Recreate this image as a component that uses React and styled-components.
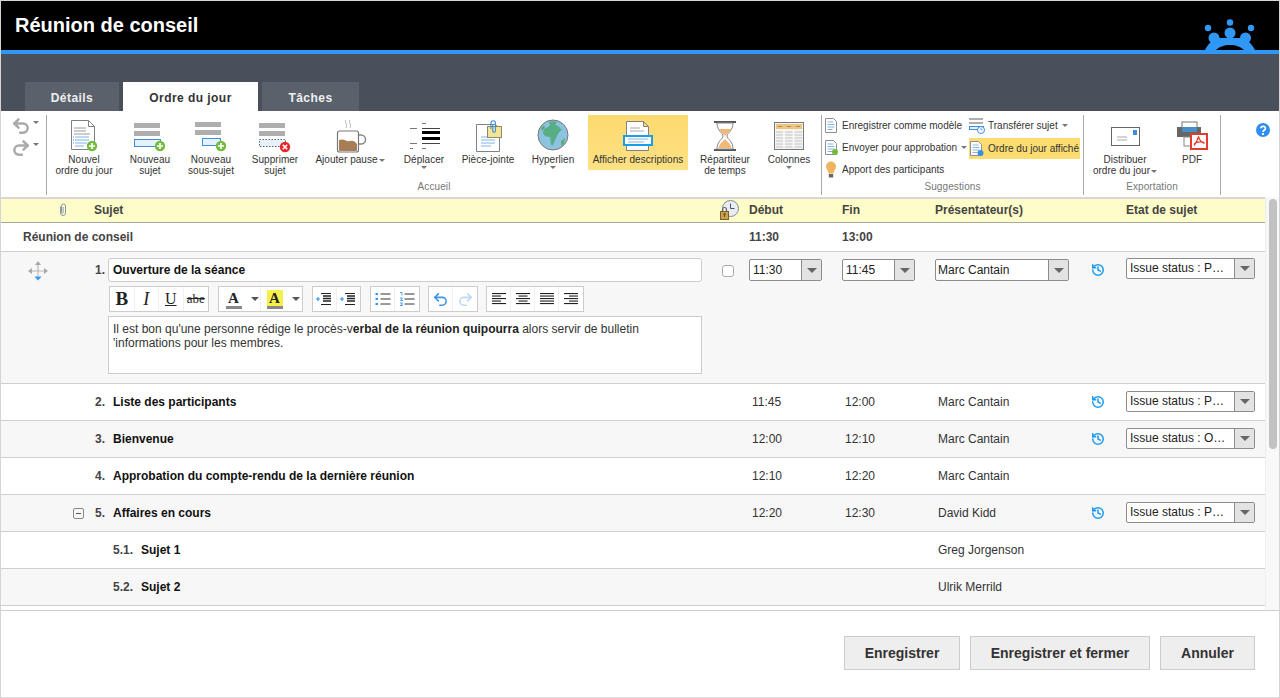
import React from 'react';
import styled, { createGlobalStyle } from 'styled-components';
import { Undo2, Redo2, History } from 'lucide-react';

const GlobalStyle = createGlobalStyle`
  html, body {
    margin: 0;
    padding: 0;
    background: #fff;
    font-family: "Liberation Sans", Arial, sans-serif;
    color: #333;
  }
  * { box-sizing: border-box; }
`;

const Frame = styled.div`
  width: 1280px;
  height: 698px;
  display: flex;
  flex-direction: column;
  overflow: hidden;
  border: 1px solid #d4d4d4;
  border-bottom-color: #ddd;
`;

const Header = styled.header`
  height: 53px;
  flex: none;
  background: #000;
  border-bottom: 4px solid #3197f5;
  display: flex;
  justify-content: space-between;
  padding: 12px 0 0 14px;
  position: relative;
`;

const Title = styled.h1`
  margin: 0;
  font-size: 20px;
  line-height: 24px;
  font-weight: 700;
  color: #fff;
`;

const LogoWrap = styled.div`
  position: absolute;
  right: 23px;
  bottom: -4px;
  height: 36px;
  line-height: 0;
`;

const TabBand = styled.div`
  height: 57px;
  flex: none;
  background: #4a505b;
  display: flex;
  align-items: flex-end;
  gap: 4px;
  padding-left: 24px;
`;

const Tab = styled.div`
  width: ${p => p.$w}px;
  height: 29px;
  padding-top: 2px;
  display: flex;
  align-items: center;
  justify-content: center;
  font-size: 12px;
  font-weight: 700;
  letter-spacing: 0.45px;
  background: ${p => (p.$active ? '#fff' : '#5a616a')};
  color: ${p => (p.$active ? '#333' : '#eef0f2')};
`;

const Ribbon = styled.div`
  height: 86px;
  flex: none;
  display: flex;
  background: #fff;
  padding-top: 4px;
  align-items: stretch;
`;

const UndoGroup = styled.div`
  width: 46px;
  height: 80px;
  border-right: 1px solid #a9a9a9;
  display: flex;
  flex-direction: column;
  gap: 3px;
  padding: 1px 0 0 10px;
`;

const UndoRow = styled.div`
  display: flex;
  align-items: flex-start;
  color: #aaa;
  height: 19px;
  gap: 2px;
  span { margin-top: 5px; }
`;

const RibbonGroup = styled.div`
  width: ${p => p.$w}px;
  height: 80px;
  border-right: 1px solid #a9a9a9;
  display: flex;
  flex-direction: column;
`;

const GroupBody = styled.div`
  height: 66px;
  display: flex;
  align-items: flex-start;
  padding-left: ${p => p.$pad || 0}px;
`;

const GroupLabel = styled.div`
  font-size: 10px;
  line-height: 12px;
  color: #777;
  text-align: center;
  letter-spacing: 0.1px;
`;

const RibbonItem = styled.div`
  width: ${p => p.$w}px;
  flex: none;
  height: 55px;
  display: flex;
  flex-direction: column;
  align-items: center;
  background: ${p => (p.$active ? 'linear-gradient(#fdda6e, #fee184)' : 'transparent')};
  margin-left: ${p => p.$ml || 0}px;
`;

const ItemLabel = styled.div`
  font-size: 10px;
  line-height: 11px;
  text-align: center;
  color: #333;
  white-space: nowrap;
  letter-spacing: 0.04px;
`;

const Caret = styled.span`
  display: inline-block;
  width: 0;
  height: 0;
  border-left: ${p => (p.$big ? 4 : 3)}px solid transparent;
  border-right: ${p => (p.$big ? 4 : 3)}px solid transparent;
  border-top: ${p => (p.$big ? '4px solid #555' : '3px solid #777')};
  vertical-align: middle;
  margin-left: ${p => p.$ml ?? 1}px;
`;

const CaretLine = styled.div`
  height: 11px;
  display: flex;
  align-items: center;
  justify-content: center;
`;

const MiniGrid = styled.div`
  display: grid;
  grid-template-columns: 145px 111px;
  grid-auto-rows: 22px;
  padding-left: 2px;
`;

const MiniItem = styled.div`
  display: flex;
  align-items: center;
  gap: ${p => p.$gap ?? 3}px;
  font-size: 10px;
  white-space: nowrap;
  color: #333;
  height: 21px;
  margin-top: ${p => (p.$active ? '1px' : '0')};
  background: ${p => (p.$active ? '#fddc72' : 'transparent')};
`;

const HelpWrap = styled.div`
  flex: 1;
  display: flex;
  justify-content: flex-end;
  padding: 8px 9px 0 0;
`;

const Content = styled.div`
  flex: 1;
  min-height: 0;
  display: flex;
`;

const TableArea = styled.div`
  width: 1264px;
  flex: none;
  overflow: hidden;
`;

const ScrollTrack = styled.div`
  flex: 1;
  background: #f8f8f8;
  border-left: 1px solid #eee;
  padding: 2px 2px 0 3px;
`;

const ScrollThumb = styled.div`
  height: 250px;
  background: #c2c2c2;
  border-radius: 5px;
`;

const cols = '93px 625px 30px 93px 93px 153px 38px 139px';

const HeadRow = styled.div`
  display: grid;
  grid-template-columns: ${cols};
  align-items: center;
  height: 26px;
  background: #fefcc8;
  border-top: 2px solid #d6d6d6;
  border-bottom: 1px solid #a8a8a0;
  padding-bottom: 1px;
  font-size: 12px;
  font-weight: 700;
  color: #444;
`;

const HeadClip = styled.div`
  display: flex;
  justify-content: flex-end;
  padding-right: 26px;
  line-height: 0;
`;

const Row = styled.div`
  display: grid;
  grid-template-columns: ${cols};
  align-items: center;
  height: ${p => p.$h || 37}px;
  flex: none;
  background: ${p => (p.$alt ? '#f7f7f7' : '#fff')};
  border-bottom: 1px solid #cfcfcf;
  font-size: 12px;
  color: #333;
`;

const OpenRow = styled(Row)`
  height: 132px;
  align-items: start;
  padding-top: 6px;
`;

const SummaryName = styled.div`
  grid-column: 1 / 3;
  padding-left: 22px;
  font-weight: 700;
  color: #444;
`;

const SummaryTime = styled.div`
  font-weight: 700;
  color: #444;
`;

const Handle = styled.div`
  padding: 3px 0 0 27px;
  line-height: 0;
`;

const Toggle = styled.div`
  display: flex;
  justify-content: flex-end;
  padding-right: 10px;
`;

const ToggleBox = styled.div`
  width: 11px;
  height: 11px;
  border: 1px solid #888;
  border-radius: 2px;
  display: flex;
  align-items: center;
  justify-content: center;
  &::after {
    content: '';
    width: 5px;
    height: 1px;
    background: #555;
  }
`;

const Subject = styled.div`
  display: flex;
  align-items: center;
`;

const Num = styled.span`
  width: 11px;
  text-align: right;
  flex: none;
  font-weight: 700;
  color: #444;
`;

const SubNum = styled.span`
  margin-left: 19px;
  width: 28px;
  flex: none;
  font-weight: 700;
  color: #444;
`;

const Name = styled.span`
  font-weight: 700;
  color: #111;
  margin-left: ${p => p.$ml ?? 8}px;
  white-space: nowrap;
`;

const EditCell = styled.div`
  display: grid;
  grid-template-columns: 11px 594px;
  column-gap: 3px;
  row-gap: 4px;
  align-items: center;
`;

const TitleInput = styled.div`
  height: 24px;
  border: 1px solid #ccc;
  border-radius: 3px;
  background: #fff;
  padding-left: 4px;
  font-weight: 700;
  color: #111;
  line-height: 22px;
`;

const EdToolbar = styled.div`
  grid-column: 2;
  height: 26px;
  display: flex;
  padding-left: 1px;
`;

const EdGroup = styled.div`
  display: flex;
  height: 26px;
  background: #fff;
  border: 1px solid #ccc;
  margin-right: ${p => p.$mr || 0}px;
`;

const EdBtn = styled.div`
  width: ${p => p.$w || 24}px;
  display: flex;
  align-items: center;
  justify-content: center;
  border-right: 1px solid ${p => (p.$open ? 'transparent' : '#f0f0f0')};
  font-family: "Liberation Serif", "Times New Roman", serif;
  font-size: ${p => p.$fs || 17}px;
  font-weight: ${p => (p.$b ? 700 : 400)};
  font-style: ${p => (p.$i ? 'italic' : 'normal')};
  text-decoration: ${p => p.$deco || 'none'};
  color: ${p => p.$color || '#222'};
  &:last-child { border-right: 0; }
`;

const ColorA = styled.span`
  display: inline-block;
  width: 16px;
  height: 19px;
  line-height: 16px;
  text-align: center;
  font-family: "Liberation Serif", serif;
  font-size: 15px;
  font-weight: 700;
  color: #222;
  background: ${p => p.$bg || 'transparent'};
  border-bottom: 3px solid #888;
`;

const Editor = styled.div`
  grid-column: 2;
  height: 58px;
  border: 1px solid #ccc;
  background: #fff;
  padding: 5px 4px;
  font-size: 12px;
  line-height: 14px;
  color: #333;
  strong { color: #222; }
`;

const CheckCell = styled.div`
  padding: 7px 0 0 3px;
`;

const CheckBox = styled.div`
  width: 12px;
  height: 12px;
  background: #fff;
  border: 1px solid #aaa;
  border-radius: 3px;
`;

const Select = styled.div`
  width: ${p => p.$w}px;
  height: ${p => (p.$status ? 21 : 22)}px;
  margin-top: ${p => p.$mt || 0}px;
  margin-bottom: ${p => (p.$status ? 1 : 0)}px;
  display: flex;
  background: #fff;
  border: 1px solid #8c8c8c;
  border-radius: 2px;
  font-size: 12px;
  color: #222;
`;

const SelectText = styled.div`
  flex: 1;
  padding-left: ${p => p.$pl || 3}px;
  line-height: ${p => (p.$status ? 18 : 20)}px;
  white-space: nowrap;
  overflow: hidden;
`;

const SelectBtn = styled.div`
  width: 20px;
  background: #e3e3e3;
  border-left: 1px solid #8c8c8c;
  display: flex;
  align-items: center;
  justify-content: center;
  &::after {
    content: '';
    border-left: 5px solid transparent;
    border-right: 5px solid transparent;
    border-top: 5px solid #666;
  }
`;

const Value = styled.div`
  padding-left: 3px;
  color: #333;
`;

const HistoryCell = styled.div`
  padding: ${p => (p.$top ? '5px' : '0')} 0 0 3px;
  color: #1e9bf0;
  line-height: 0;
`;

const Footer = styled.footer`
  height: 87px;
  flex: none;
  border-top: 1px solid #cfcfcf;
  display: flex;
  justify-content: flex-end;
  align-items: flex-start;
  gap: 10px;
  padding: 25px 24px 0 0;
  background: #fff;
`;

const FootButton = styled.div`
  width: ${p => p.$w}px;
  height: 34px;
  background: #eee;
  border: 1px solid #ccc;
  display: flex;
  align-items: center;
  justify-content: center;
  font-size: 14px;
  font-weight: 700;
  color: #333;
`;

const Ico = ({ cx, w = 44, children }) => (
  <svg width={w} height={39} viewBox={`${cx - w / 2} 115 ${w} 39`} style={{ flex: 'none' }}>
    {children}
  </svg>
);

const Plus = ({ x, y }) => (
  <g>
    <circle cx={x} cy={y} r={5.2} fill="#74bb3e" />
    <path d={`M${x - 3} ${y}h6M${x} ${y - 3}v6`} stroke="#fff" strokeWidth={1.7} />
  </g>
);

const Cross = ({ x, y }) => (
  <g>
    <circle cx={x} cy={y} r={5.2} fill="#e8262a" />
    <path d={`M${x - 2.2} ${y - 2.2}l4.4 4.4M${x + 2.2} ${y - 2.2}l-4.4 4.4`} stroke="#fff" strokeWidth={1.6} />
  </g>
);

const DocShape = ({ x, y, w, h, fold = 6 }) => (
  <path
    d={`M${x + 0.5} ${y + 0.5}h${w - fold}l${fold} ${fold}V${y + h - 0.5}H${x + 0.5}zM${x + w - fold + 0.5} ${y + 0.5}v${fold}h${fold}`}
    fill="#fff"
    stroke="#7d8288"
  />
);

const NewDocIcon = () => (
  <Ico cx={84}>
    <DocShape x={71} y={120} w={23} h={30} />
    <path d="M74 128h12M74 131h12M74 134h16" stroke="#9a9a9a" />
    <path d="M75 137h14M75 140h14M75 143h12M75 146h9" stroke="#7fb2e5" />
    <path d="M73 137h1M73 140h1M73 143h1" stroke="#3d8fe0" />
    <Plus x={92} y={146} />
  </Ico>
);

const NewTopicIcon = () => (
  <Ico cx={150}>
    <rect x={134} y={123} width={26} height={5} fill="#aeaeae" />
    <rect x={134} y={131} width={26} height={5} fill="#aeaeae" />
    <rect x={134.5} y={139.5} width={26} height={7} fill="#e6f1fb" stroke="#3b8fe0" />
    <Plus x={160} y={146} />
  </Ico>
);

const NewSubIcon = () => (
  <Ico cx={211}>
    <rect x={195} y={122} width={26} height={5} fill="#aeaeae" />
    <rect x={195} y={130} width={26} height={5} fill="#aeaeae" />
    <rect x={202.5} y={138.5} width={18} height={7} fill="#e6f1fb" stroke="#3b8fe0" />
    <Plus x={221} y={146} />
  </Ico>
);

const DeleteIcon = () => (
  <Ico cx={275}>
    <rect x={259} y={123} width={26} height={5} fill="#aeaeae" />
    <rect x={259} y={131} width={26} height={5} fill="#aeaeae" />
    <rect x={259.5} y={139.5} width={26} height={7} fill="#e6f1fb" stroke="#666" strokeDasharray="1.5 1.5" />
    <Cross x={285} y={147} />
  </Ico>
);

const CupIcon = () => (
  <Ico cx={350}>
    <path d="M346 120c-2 2 2 4 0 8M350 120c-2 2 2 4 0 8" fill="none" stroke="#b5b5b5" />
    <path d="M358 135h3a4.5 4.5 0 0 1 4.5 4.5a4.5 4.5 0 0 1-4.5 4.5h-3" fill="none" stroke="#888" strokeWidth={1.5} />
    <path d="M337.5 133a2 2 0 0 1 2-2h17a2 2 0 0 1 2 2v17a2 2 0 0 1-2 2h-17a2 2 0 0 1-2-2z" fill="#fff" stroke="#777" strokeWidth={1.2} />
    <path d="M339 140c5-2 7 2 11 1s5 1 7 3v6a1 1 0 0 1-1 1h-16a1 1 0 0 1-1-1z" fill="#a87d55" />
  </Ico>
);

const MoveIcon = () => (
  <Ico cx={424}>
    <path d="M410 128.5h7M410 143.5h7M410 148.5h3M422 123.5h4M422 148.5h4" stroke="#777" strokeWidth={1} />
    <path d="M422 128.5h18M422 143.5h18" stroke="#444" strokeWidth={1} />
    <path d="M422 132.5h18M422 138.5h18" stroke="#000" strokeWidth={3} />
  </Ico>
);

const AttachIcon = () => (
  <Ico cx={488}>
    <DocShape x={476} y={124} w={23} h={28} fold={4} />
    <path d="M481 137h14M481 140h14M481 143h14M481 146h10" stroke="#7fb2e5" />
    <rect x={487.5} y={126.5} width={14} height={11} fill="#f3e595" stroke="#8b8b6a" />
    <path d="M491 129v-6a2.2 2.2 0 0 1 4.4 0v8a1.3 1.3 0 0 1-2.6 0v-6" fill="none" stroke="#3b8fe0" strokeWidth={1.1} />
  </Ico>
);

const GlobeIcon = () => (
  <Ico cx={553}>
    <circle cx={553} cy={135} r={15} fill="#8dc2e0" stroke="#777" />
    <path d="M549 122c3-1 6-1 8 0l-2 3 3 1 4 4c-2 1-3 2-4 4-1 3-3 5-4 9l-2 3c-2-3-1-6-2-9-3 0-6-1-7-4 0-3 2-5 5-6l2-2z" fill="#57ad84" />
    <path d="M561 141l4-3-1 6-3 2zM541 128l3-3 1 3-3 3z" fill="#57ad84" />
  </Ico>
);

const ShowDescIcon = () => (
  <Ico cx={638}>
    <DocShape x={626} y={121} w={22} h={30} fold={5} />
    <path d="M630 128h10M630 131h14" stroke="#aaa" />
    <rect x={624} y={136} width={28} height={9} fill="#fff" stroke="#17a0e8" strokeWidth={2} />
    <path d="M628 139h20M628 142h16" stroke="#8bb4d6" />
  </Ico>
);

const HourglassIcon = () => (
  <Ico cx={725}>
    <path d="M714 122h22M714 150h22" stroke="#555" strokeWidth={2} />
    <path d="M717 123c0 8 6 10 6 13s-6 5-6 13h16c0-8-6-10-6-13s6-5 6-13z" fill="#fff" stroke="#888" />
    <path d="M719 129h12c-1 3-5 5-6 7-1-2-5-4-6-7zM718.5 148c1-5 5-7 6.500-9 1.500 2 5.500 4 6.500 9z" fill="#f1b878" />
  </Ico>
);

const ColumnsIcon = () => (
  <Ico cx={789}>
    <rect x={774.5} y={122.500} width={29} height={27} fill="#f3f3f3" stroke="#777" />
    <rect x={776} y={124} width={26} height={5} fill="#eec27f" />
    <path d="M778 126.500h4M787 126.500h4M796 126.500h4" stroke="#b98b4b" />
    <path d="M776 132h26M776 135h26M776 138h26M776 141h26M776 144h26M776 147h26" stroke="#c4c4c4" />
    <path d="M784 130v18M793.500 130v18" stroke="#fff" strokeWidth={1.5} />
  </Ico>
);

const EnvelopeIcon = () => (
  <Ico cx={1125}>
    <rect x={1111.500} y={127.500} width={28} height={18} fill="#fff" stroke="#666" />
    <rect x={1133} y={130} width={4} height={5} fill="#3b8fe0" />
    <path d="M1117 137h10M1117 140h10" stroke="#aaa" />
  </Ico>
);

const PdfIcon = () => (
  <Ico cx={1192}>
    <rect x={1182} y={122} width={15} height={6} fill="#fff" stroke="#777" />
    <rect x={1177} y={127} width={24} height={10} fill="#666" />
    <rect x={1182} y={127} width={15} height={5} fill="#4a90c8" />
    <rect x={1184} y={137} width={12} height={9} fill="#fff" stroke="#888" />
    <rect x={1191} y={134} width={16} height={15} fill="#fff" stroke="#e53a2e" strokeWidth={2} />
    <path d="M1198.500 136.500c-1 4-2 6-4.500 9M1198.500 136.500c1 4 3 6 6 7M1194 143.500c3-1.500 7-2 10.500-1" fill="none" stroke="#e53a2e" strokeWidth={1.2} />
  </Ico>
);

const DocMini = ({ children }) => (
  <svg width={15} height={17} viewBox="0 0 15 17" style={{ flex: 'none' }}>
    <path d="M1.500 1.500h8l3 3v11h-11z" fill="#fff" stroke="#8a8f95" />
    <path d="M3.500 5h6M3.500 7.500h7M3.500 10h7M3.500 12.500h5" stroke="#86b5e2" />
    {children}
  </svg>
);

const BulbIcon = () => (
  <svg width={15} height={17} viewBox="0 0 15 17" style={{ flex: 'none' }}>
    <path d="M7 0.500a5 5 0 0 1 5 5c0 3-2.500 4.500-2.800 7h-4.400C4.500 10 2 8.500 2 5.500a5 5 0 0 1 5-5z" fill="#f0b45e" />
    <rect x={4.800} y={13} width={4.400} height={3.500} fill="#666" />
  </svg>
);

const TransferIcon = () => (
  <svg width={16} height={17} viewBox="0 0 16 17" style={{ flex: 'none' }}>
    <rect x={0} y={1} width={14} height={2} fill="#aeaeae" />
    <rect x={0} y={5} width={14} height={2} fill="#aeaeae" />
    <rect x={0.500} y={9.500} width={14} height={3} fill="#e6f1fb" stroke="#3b8fe0" />
    <circle cx={12} cy={13} r={3.500} fill="#fff" stroke="#3b8fe0" />
    <path d="M12 11v2h1.500" fill="none" stroke="#3b8fe0" strokeWidth={0.8} />
  </svg>
);

const LogoIcon = () => (
  <svg width={52} height={36} viewBox="1204 18 52 36">
    <circle cx={1208} cy={28} r={3.200} fill="#3197f5" />
    <circle cx={1230} cy={22.500} r={3.200} fill="#3197f5" />
    <circle cx={1251} cy={28} r={3.200} fill="#3197f5" />
    <circle cx={1214} cy={38} r={5.500} fill="#3197f5" />
    <circle cx={1230} cy={33} r={5.500} fill="#3197f5" />
    <circle cx={1245.500} cy={38} r={5.500} fill="#3197f5" />
    <path d="M1205 50c3-6 8-11 13-12h24c5 1 10 6 13 12h-11c-3-3-8-5-14-5s-11 2-14 5z" fill="#3197f5" />
    <path d="M1213 38h34v6h-34z" fill="#3197f5" />
  </svg>
);

const HelpIcon = () => (
  <svg width={14} height={14} viewBox="0 0 14 14">
    <circle cx={7} cy={7} r={7} fill="#2f8fef" />
    <path d="M4.800 5.300a2.300 2 0 1 1 3.600 1.700c-.9.600-1.400 1-1.400 2" fill="none" stroke="#fff" strokeWidth={1.700} />
    <rect x={6} y={10} width={2} height={2} fill="#fff" />
  </svg>
);

const ClipIcon = () => (
  <svg width={10} height={14} viewBox="0 0 10 14">
    <path d="M2.500 3.500v6.500a2.500 2.500 0 0 0 5 0V3a2 2 0 0 0-4 0v6.500a.8.8 0 0 0 1.600 0V4" fill="none" stroke="#8a9aa8" strokeWidth={1} />
  </svg>
);

const ClockLockIcon = () => (
  <svg width={21} height={21} viewBox="0 0 21 21">
    <circle cx={11.500} cy={8.500} r={8} fill="#e8ecf4" stroke="#8a8a8a" />
    <path d="M11.500 3.500v5h4" fill="none" stroke="#555" />
    <rect x={1.500} y={11.500} width={8} height={8} fill="#c9a24e" stroke="#7a6328" />
    <path d="M3.500 11.500v-2a2 2 0 0 1 4 0v2" fill="none" stroke="#666" strokeWidth={1.200} />
    <path d="M4 14h3M5.500 14v3" stroke="#5c4a18" />
  </svg>
);

const MoveHandle = () => (
  <svg width={20} height={20} viewBox="0 0 20 20">
    <path d="M10 4v11M4 10h12" stroke="#b8b8b8" strokeWidth={1.200} />
    <path d="M10 0l3 4H7zM0 10l4-3v6zM20 10l-4-3v6z" fill="#a8a8a8" />
    <path d="M10 19.500l-3.500-4h7z" fill="#3197f5" />
  </svg>
);

const Lines = ({ rows }) => (
  <svg width={16} height={14} viewBox="0 0 16 14">
    {rows.map(([x, w], i) => (
      <rect key={i} x={x} y={1 + i * 2.500} width={w} height={1.100} fill="#222" />
    ))}
  </svg>
);

const IndentIcon = () => (
  <svg width={16} height={14} viewBox="0 0 16 14">
    <path d="M5 1.500h10M5 12.500h10" stroke="#222" />
    <path d="M7 4h8M7 6.500h8M7 9h8" stroke="#222" strokeWidth={1.400} />
    <path d="M0 7h4M2 5v4" stroke="#3197f5" strokeWidth={1.200} />
  </svg>
);

const ListIcon = ({ numbered }) => (
  <svg width={16} height={14} viewBox="0 0 16 14">
    <path d="M5.500 2h10M5.500 7h10M5.500 12h10" stroke="#333" />
    {numbered ? (
      <path d="M1 .500h2v3M1 6h2.500l-2 2.500h2.500M1 11h2.500l-1 1 1 1.500H1" fill="none" stroke="#3197f5" strokeWidth={0.900} />
    ) : (
      <path d="M.500 2h2.500M.500 7h2.500M.500 12h2.500" stroke="#3197f5" strokeWidth={2} />
    )}
  </svg>
);

const topics = [
  { num: '2.', name: 'Liste des participants', start: '11:45', end: '12:00', who: 'Marc Cantain', status: 'Issue status : P…' },
  { num: '3.', name: 'Bienvenue', start: '12:00', end: '12:10', who: 'Marc Cantain', status: 'Issue status : O…', alt: true },
  { num: '4.', name: 'Approbation du compte-rendu de la dernière réunion', start: '12:10', end: '12:20', who: 'Marc Cantain' },
  { num: '5.', name: 'Affaires en cours', start: '12:20', end: '12:30', who: 'David Kidd', status: 'Issue status : P…', alt: true, toggle: true },
];

const TopicRow = ({ t }) => (
  <Row $alt={t.alt}>
    <Toggle>{t.toggle && <ToggleBox />}</Toggle>
    <Subject>
      <Num>{t.num}</Num>
      <Name>{t.name}</Name>
    </Subject>
    <div />
    <Value>{t.start}</Value>
    <Value>{t.end}</Value>
    <Value>{t.who}</Value>
    <HistoryCell>{t.status && <History size={14} strokeWidth={2.6} />}</HistoryCell>
    {t.status ? (
      <Select $w={129} $status>
        <SelectText $status>{t.status}</SelectText>
        <SelectBtn />
      </Select>
    ) : (
      <div />
    )}
  </Row>
);

const SubRow = ({ num, name, who, alt }) => (
  <Row $alt={alt}>
    <div />
    <Subject>
      <SubNum>{num}</SubNum>
      <Name $ml={0}>{name}</Name>
    </Subject>
    <div />
    <div />
    <div />
    <Value>{who}</Value>
  </Row>
);

const App = () => (
  <Frame>
    <GlobalStyle />
    <Header>
      <Title>Réunion de conseil</Title>
      <LogoWrap>
        <LogoIcon />
      </LogoWrap>
    </Header>
    <TabBand>
      <Tab $w={94}>Détails</Tab>
      <Tab $w={135} $active>Ordre du jour</Tab>
      <Tab $w={97}>Tâches</Tab>
    </TabBand>

    <Ribbon>
      <UndoGroup>
        <UndoRow>
          <Undo2 size={20} strokeWidth={3} />
          <Caret $ml={0} />
        </UndoRow>
        <UndoRow>
          <Redo2 size={20} strokeWidth={3} />
          <Caret $ml={0} />
        </UndoRow>
      </UndoGroup>

      <RibbonGroup $w={775}>
        <GroupBody>
          <RibbonItem $w={74}><NewDocIcon /><ItemLabel>Nouvel<br />ordre du jour</ItemLabel></RibbonItem>
          <RibbonItem $w={58}><NewTopicIcon /><ItemLabel>Nouveau<br />sujet</ItemLabel></RibbonItem>
          <RibbonItem $w={64}><NewSubIcon /><ItemLabel>Nouveau<br />sous-sujet</ItemLabel></RibbonItem>
          <RibbonItem $w={64}><DeleteIcon /><ItemLabel>Supprimer<br />sujet</ItemLabel></RibbonItem>
          <RibbonItem $w={86}><CupIcon /><ItemLabel>Ajouter pause<Caret /></ItemLabel></RibbonItem>
          <RibbonItem $w={62}><MoveIcon /><ItemLabel>Déplacer</ItemLabel><CaretLine><Caret $ml={0} /></CaretLine></RibbonItem>
          <RibbonItem $w={66}><AttachIcon /><ItemLabel>Pièce-jointe</ItemLabel></RibbonItem>
          <RibbonItem $w={64}><GlobeIcon /><ItemLabel>Hyperlien</ItemLabel><CaretLine><Caret $ml={0} /></CaretLine></RibbonItem>
          <RibbonItem $w={100} $ml={3} $active><ShowDescIcon /><ItemLabel>Afficher descriptions</ItemLabel></RibbonItem>
          <RibbonItem $w={74}><HourglassIcon /><ItemLabel>Répartiteur<br />de temps</ItemLabel></RibbonItem>
          <RibbonItem $w={54}><ColumnsIcon /><ItemLabel>Colonnes</ItemLabel><CaretLine><Caret $ml={0} /></CaretLine></RibbonItem>
        </GroupBody>
        <GroupLabel>Accueil</GroupLabel>
      </RibbonGroup>

      <RibbonGroup $w={262}>
        <GroupBody>
          <MiniGrid>
            <MiniItem><DocMini />Enregistrer comme modèle</MiniItem>
            <MiniItem><TransferIcon />Transférer sujet<Caret /></MiniItem>
            <MiniItem>
              <DocMini><circle cx={11} cy={13} r={3} fill="#74bb3e" /></DocMini>
              Envoyer pour approbation<Caret />
            </MiniItem>
            <MiniItem $active $gap={4}>
              <DocMini><circle cx={11.500} cy={13} r={3} fill="#3b8fe0" /></DocMini>
              Ordre du jour affiché
            </MiniItem>
            <MiniItem><BulbIcon />Apport des participants</MiniItem>
          </MiniGrid>
        </GroupBody>
        <GroupLabel>Suggestions</GroupLabel>
      </RibbonGroup>

      <RibbonGroup $w={137}>
        <GroupBody $pad={8}>
          <RibbonItem $w={66}><EnvelopeIcon /><ItemLabel>Distribuer<br />ordre du jour<Caret /></ItemLabel></RibbonItem>
          <RibbonItem $w={68}><PdfIcon /><ItemLabel>PDF</ItemLabel></RibbonItem>
        </GroupBody>
        <GroupLabel>Exportation</GroupLabel>
      </RibbonGroup>

      <HelpWrap>
        <HelpIcon />
      </HelpWrap>
    </Ribbon>

    <Content>
      <TableArea>
        <HeadRow>
          <HeadClip><ClipIcon /></HeadClip>
          <div>Sujet</div>
          <ClockLockIcon />
          <div>Début</div>
          <div>Fin</div>
          <div>Présentateur(s)</div>
          <div />
          <div>Etat de sujet</div>
        </HeadRow>
        <Row $h={29}>
          <SummaryName>Réunion de conseil</SummaryName>
          <div />
          <SummaryTime>11:30</SummaryTime>
          <SummaryTime>13:00</SummaryTime>
        </Row>

        <OpenRow $alt>
          <Handle><MoveHandle /></Handle>
          <EditCell>
            <Num>1.</Num>
            <TitleInput>Ouverture de la séance</TitleInput>
            <EdToolbar>
              <EdGroup $mr={9}>
                <EdBtn $w={24.5} $b $fs={19}>B</EdBtn>
                <EdBtn $w={24.5} $i $fs={18}>I</EdBtn>
                <EdBtn $w={24.5} $fs={16} $deco="underline">U</EdBtn>
                <EdBtn $w={24.5} $fs={13} $deco="line-through">abe</EdBtn>
              </EdGroup>
              <EdGroup $mr={9}>
                <EdBtn $w={30} $open><ColorA>A</ColorA></EdBtn>
                <EdBtn $w={12}><Caret $big $ml={0} /></EdBtn>
                <EdBtn $w={28} $open><ColorA $bg="#f7f04a">A</ColorA></EdBtn>
                <EdBtn $w={13}><Caret $big $ml={0} /></EdBtn>
              </EdGroup>
              <EdGroup $mr={9}>
                <EdBtn $w={23.5}><IndentIcon /></EdBtn>
                <EdBtn $w={23.5}><IndentIcon /></EdBtn>
              </EdGroup>
              <EdGroup $mr={8}>
                <EdBtn><ListIcon /></EdBtn>
                <EdBtn><ListIcon numbered /></EdBtn>
              </EdGroup>
              <EdGroup $mr={8}>
                <EdBtn $color="#3b93ee"><Undo2 size={17} strokeWidth={2.2} /></EdBtn>
                <EdBtn $color="#bcd9f6"><Redo2 size={17} strokeWidth={2.2} /></EdBtn>
              </EdGroup>
              <EdGroup>
                <EdBtn><Lines rows={[[1, 14], [1, 9], [1, 14], [1, 9], [1, 14]]} /></EdBtn>
                <EdBtn><Lines rows={[[1, 14], [3.500, 9], [1, 14], [3.500, 9], [1, 14]]} /></EdBtn>
                <EdBtn><Lines rows={[[1, 14], [1, 14], [1, 14], [1, 14], [1, 14]]} /></EdBtn>
                <EdBtn><Lines rows={[[1, 14], [6, 9], [1, 14], [6, 9], [1, 14]]} /></EdBtn>
              </EdGroup>
            </EdToolbar>
            <Editor>
              Il est bon qu'une personne rédige le procès-v<strong>erbal de la réunion quipourra</strong> alors servir de bulletin
              <br />
              'informations pour les membres.
            </Editor>
          </EditCell>
          <CheckCell><CheckBox /></CheckCell>
          <Select $w={73} $mt={1}><SelectText>11:30</SelectText><SelectBtn /></Select>
          <Select $w={73} $mt={1}><SelectText>11:45</SelectText><SelectBtn /></Select>
          <Select $w={134} $mt={1}><SelectText $pl={2}>Marc Cantain</SelectText><SelectBtn /></Select>
          <HistoryCell $top><History size={14} strokeWidth={2.6} /></HistoryCell>
          <Select $w={129} $status><SelectText $status>Issue status : P…</SelectText><SelectBtn /></Select>
        </OpenRow>

        {topics.map(t => (
          <TopicRow key={t.num} t={t} />
        ))}
        <SubRow num="5.1." name="Sujet 1" who="Greg Jorgenson" />
        <SubRow num="5.2." name="Sujet 2" who="Ulrik Merrild" alt />
        <Row $h={5} />
      </TableArea>
      <ScrollTrack>
        <ScrollThumb />
      </ScrollTrack>
    </Content>

    <Footer>
      <FootButton $w={116}>Enregistrer</FootButton>
      <FootButton $w={180}>Enregistrer et fermer</FootButton>
      <FootButton $w={95}>Annuler</FootButton>
    </Footer>
  </Frame>
);

export default App;
